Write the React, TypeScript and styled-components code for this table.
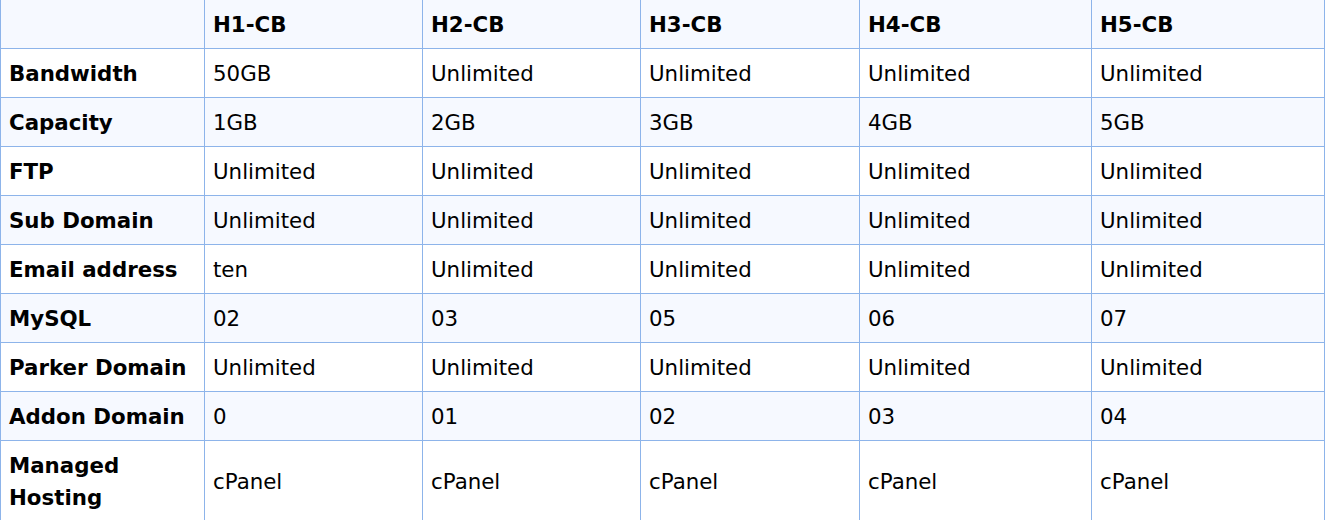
import React from "react";
import styled, { createGlobalStyle } from "styled-components";

const Global = createGlobalStyle`
  html, body { margin: 0; padding: 0; background: #ffffff; }
  body { font-family: "DejaVu Sans", Verdana, sans-serif; color: #000; }
`;

const Table = styled.table`
  border-collapse: collapse;
  table-layout: fixed;
  width: 1324px;
  font-size: 16pt;
  line-height: 32px;
`;

const Row = styled.tr<{ $shade: boolean }>`
  background: ${(p) => (p.$shade ? "#f6f9ff" : "#ffffff")};
`;

const Cell = styled.td<{ $bold?: boolean }>`
  border-left: 1px solid #8db4ea;
  border-right: 1px solid #8db4ea;
  border-bottom: 1px solid #8db4ea;
  padding: 9px 8px 7px;
  text-align: left;
  vertical-align: middle;
  font-weight: ${(p) => (p.$bold ? 700 : 400)};
`;

const HeadCell = styled(Cell).attrs({ as: "th" })``;

const plans = ["H1-CB", "H2-CB", "H3-CB", "H4-CB", "H5-CB"];

const rows: [string, string[]][] = [
  ["Bandwidth", ["50GB", "Unlimited", "Unlimited", "Unlimited", "Unlimited"]],
  ["Capacity", ["1GB", "2GB", "3GB", "4GB", "5GB"]],
  ["FTP", ["Unlimited", "Unlimited", "Unlimited", "Unlimited", "Unlimited"]],
  ["Sub Domain", ["Unlimited", "Unlimited", "Unlimited", "Unlimited", "Unlimited"]],
  ["Email address", ["ten", "Unlimited", "Unlimited", "Unlimited", "Unlimited"]],
  ["MySQL", ["02", "03", "05", "06", "07"]],
  ["Parker Domain", ["Unlimited", "Unlimited", "Unlimited", "Unlimited", "Unlimited"]],
  ["Addon Domain", ["0", "01", "02", "03", "04"]],
  ["Managed Hosting", ["cPanel", "cPanel", "cPanel", "cPanel", "cPanel"]],
];

const widths = [204, 218, 218, 219, 232, 233];

export default function App() {
  return (
    <>
      <Global />
      <Table>
        <colgroup>
          {widths.map((w, i) => (
            <col key={i} style={{ width: w }} />
          ))}
        </colgroup>
        <thead>
          <Row $shade>
            <HeadCell $bold></HeadCell>
            {plans.map((p) => (
              <HeadCell key={p} $bold>
                {p}
              </HeadCell>
            ))}
          </Row>
        </thead>
        <tbody>
          {rows.map(([label, vals], i) => (
            <Row key={label} $shade={i % 2 === 1}>
              <Cell $bold>{label}</Cell>
              {vals.map((v, j) => (
                <Cell key={j}>{v}</Cell>
              ))}
            </Row>
          ))}
        </tbody>
      </Table>
    </>
  );
}
